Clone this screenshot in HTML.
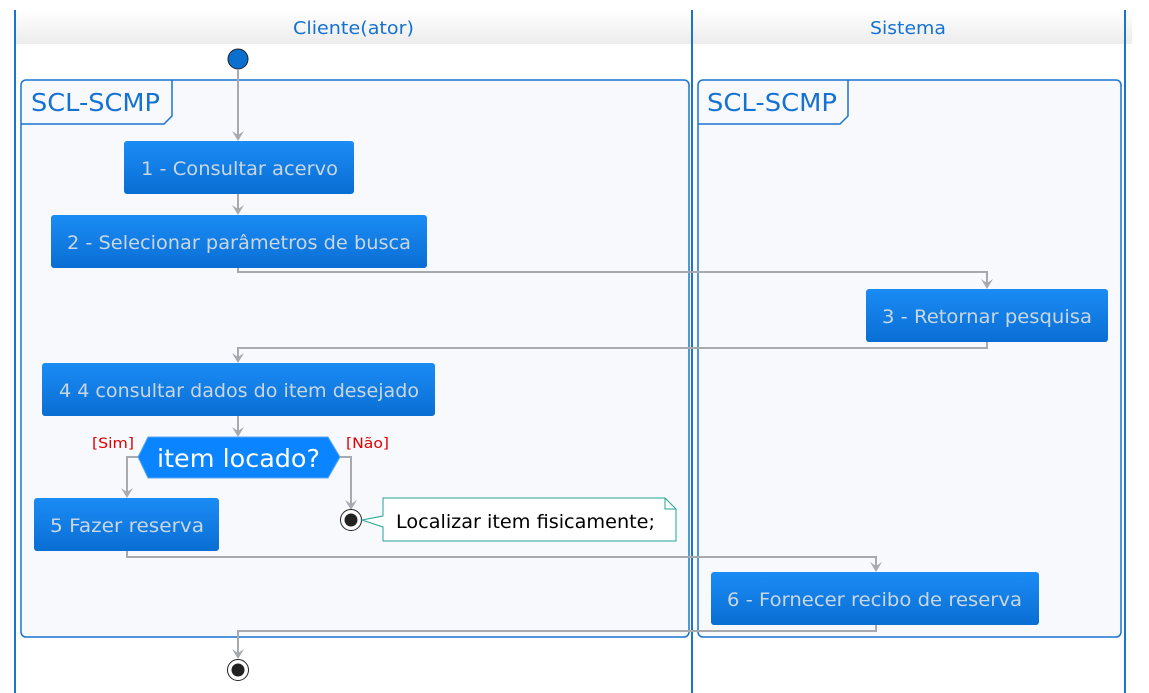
<!DOCTYPE html>
<html><head><meta charset="utf-8"><style>
html,body{margin:0;padding:0;background:#fff;width:1149px;height:693px;overflow:hidden}
svg text{font-family:"DejaVu Sans","Liberation Sans",sans-serif}
</style></head><body>
<svg width="1149" height="693" viewBox="0 0 1149 693" xmlns="http://www.w3.org/2000/svg">
<defs>
<linearGradient id="hd" x1="0" y1="0" x2="0" y2="1"><stop offset="0" stop-color="#ffffff"/><stop offset="1" stop-color="#ececec"/></linearGradient>
<linearGradient id="bx" x1="0" y1="0" x2="0" y2="1"><stop offset="0" stop-color="#1a8cf5"/><stop offset="1" stop-color="#0a6ed4"/></linearGradient>
</defs>
<rect x="15" y="10" width="1117" height="34" fill="url(#hd)"/>
<text x="293" y="34" font-size="18" fill="#1572d2" textLength="121" lengthAdjust="spacingAndGlyphs">Cliente(ator)</text>
<text x="870" y="34" font-size="18" fill="#1572d2" textLength="76" lengthAdjust="spacingAndGlyphs">Sistema</text>
<g stroke="#1a73d0" stroke-width="2">
<line x1="15" y1="10" x2="15" y2="693"/><line x1="692" y1="10" x2="692" y2="693"/><line x1="1125" y1="10" x2="1125" y2="693"/>
</g>
<rect x="21" y="80" width="668" height="557" rx="5" fill="#f8f9fd" stroke="#1a73d0" stroke-width="1.5"/>
<path d="M21 124 H164 L172 116 V80" fill="none" stroke="#1a73d0" stroke-width="1.5"/>
<text x="31" y="111" font-size="25" fill="#1572d2" textLength="129" lengthAdjust="spacingAndGlyphs">SCL-SCMP</text>
<rect x="698" y="80" width="423" height="557" rx="5" fill="#f8f9fd" stroke="#1a73d0" stroke-width="1.5"/>
<path d="M698 124 H840 L848 116 V80" fill="none" stroke="#1a73d0" stroke-width="1.5"/>
<text x="707" y="111" font-size="25" fill="#1572d2" textLength="130" lengthAdjust="spacingAndGlyphs">SCL-SCMP</text>
<circle cx="238" cy="59" r="10" fill="#0b6fd0" stroke="#222" stroke-width="1"/>
<g fill="none" stroke="#a6a9ad" stroke-width="2">
<path d="M238 69 V139"/><path d="M238 194 V213"/>
<path d="M238 268 V272 H987 V287"/>
<path d="M987 342 V348 H238 V361"/>
<path d="M238 416 V435"/>
<path d="M138 457 H127 V496"/>
<path d="M340 457 H351 V508"/>
<path d="M127 551 V557 H876 V570"/>
<path d="M876 625 V631 H238 V657"/>
</g>
<g fill="#a6a9ad">
<path d="M232 131 L238 141 L244 131 L238 135Z"/>
<path d="M232 205 L238 215 L244 205 L238 209Z"/>
<path d="M981 279 L987 289 L993 279 L987 283Z"/>
<path d="M232 353 L238 363 L244 353 L238 357Z"/>
<path d="M232 427 L238 437 L244 427 L238 431Z"/>
<path d="M121 488 L127 498 L133 488 L127 492Z"/>
<path d="M345 500 L351 510 L357 500 L351 504Z"/>
<path d="M870 562 L876 572 L882 562 L876 566Z"/>
<path d="M232 649 L238 659 L244 649 L238 653Z"/>
</g>
<g font-size="19" fill="#c9d6e3" lengthAdjust="spacingAndGlyphs">
<rect x="124" y="141" width="230" height="53" rx="3" fill="url(#bx)"/>
<text x="141" y="175" textLength="197" lengthAdjust="spacingAndGlyphs">1 - Consultar acervo</text>
<rect x="51" y="215" width="376" height="53" rx="3" fill="url(#bx)"/>
<text x="67" y="249" textLength="344" lengthAdjust="spacingAndGlyphs">2 - Selecionar parâmetros de busca</text>
<rect x="866" y="289" width="242" height="53" rx="3" fill="url(#bx)"/>
<text x="882" y="323" textLength="210" lengthAdjust="spacingAndGlyphs">3 - Retornar pesquisa</text>
<rect x="42" y="363" width="393" height="53" rx="3" fill="url(#bx)"/>
<text x="59" y="397" textLength="360" lengthAdjust="spacingAndGlyphs">4 4 consultar dados do item desejado</text>
<rect x="34" y="498" width="185" height="53" rx="3" fill="url(#bx)"/>
<text x="50" y="532" textLength="154" lengthAdjust="spacingAndGlyphs">5 Fazer reserva</text>
<rect x="711" y="572" width="328" height="53" rx="3" fill="url(#bx)"/>
<text x="727" y="606" textLength="295" lengthAdjust="spacingAndGlyphs">6 - Fornecer recibo de reserva</text>
</g>
<path d="M138 457 L148 437 H328 L340 457 L328 478 H148 Z" fill="#0a84ff" stroke="#5aa8f0" stroke-width="1"/>
<text x="157" y="467" font-size="25" fill="#ffffff" textLength="163" lengthAdjust="spacingAndGlyphs">item locado?</text>
<text x="92" y="448" font-size="14" fill="#e00000" textLength="42" lengthAdjust="spacingAndGlyphs">[Sim]</text>
<text x="346" y="448" font-size="14" fill="#e00000" textLength="43" lengthAdjust="spacingAndGlyphs">[Não]</text>
<circle cx="351" cy="520" r="10.5" fill="#fff" stroke="#222" stroke-width="1"/>
<circle cx="351" cy="520" r="6.5" fill="#222"/>
<path d="M383 498 H665 L676 509 V541 H383 V527 L362 520 L383 516 Z" fill="#fff" stroke="#20a595" stroke-width="1"/>
<path d="M665 498 V509 H676" fill="none" stroke="#20a595" stroke-width="1"/>
<text x="396" y="528" font-size="19" fill="#000" textLength="259" lengthAdjust="spacingAndGlyphs">Localizar item fisicamente;</text>
<circle cx="238" cy="670" r="10.5" fill="#fff" stroke="#222" stroke-width="1"/>
<circle cx="238" cy="670" r="6.5" fill="#222"/>
</svg>
</body></html>
